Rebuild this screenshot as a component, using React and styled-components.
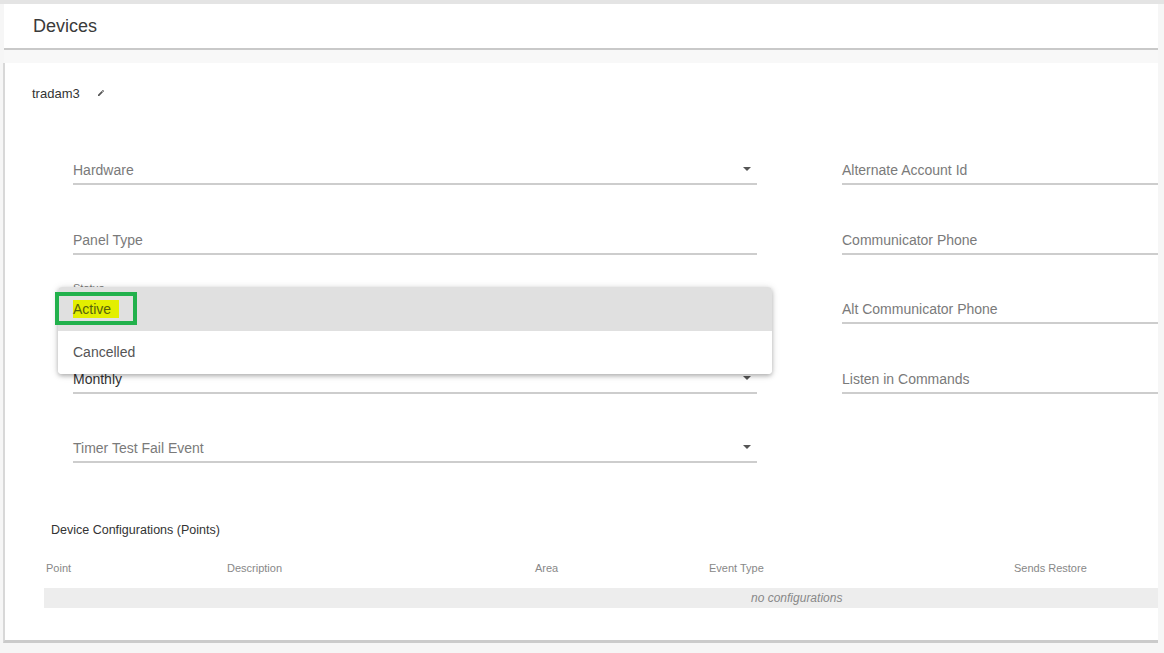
import React from 'react';
import styled, {createGlobalStyle} from "styled-components";

const GlobalStyle = createGlobalStyle`
    html, body {
        margin: 0;
        padding: 0;
        background: #f6f6f6;
        font-family: "Liberation Sans", Arial, sans-serif;
    }
`;

const leftFields = [
    {label: 'Hardware', select: true},
    {label: 'Panel Type'},
    {label: 'Status', select: true, small: true},
    {label: 'Monthly', select: true, value: true},
    {label: 'Timer Test Fail Event', select: true},
];

const rightFields = [
    'Alternate Account Id',
    'Communicator Phone',
    'Alt Communicator Phone',
    'Listen in Commands',
];

const columns = [
    {title: 'Point', left: 2},
    {title: 'Description', left: 183},
    {title: 'Area', left: 491},
    {title: 'Event Type', left: 665},
    {title: 'Sends Restore', left: 970},
];

export default function App() {
    return (
        <Page>
            <GlobalStyle/>
            <Header>
                <Title>Devices</Title>
            </Header>
            <Band/>
            <Card>
                <NameRow>
                    <Name>tradam3</Name>
                    <svg width="8" height="8" viewBox="0 0 24 24">
                        <path fill="#555" d="M3 17.25V21h3.75L17.81 9.94l-3.75-3.75L3 17.25zM20.71 7.04a1 1 0 000-1.41l-2.34-2.34a1 1 0 00-1.41 0l-1.83 1.83 3.75 3.75 1.83-1.83z"/>
                    </svg>
                </NameRow>

                <Form>
                    <Column>
                        {leftFields.map((f, key) =>
                            <Field key={key} small={f.small}>
                                <FieldText value={f.value} small={f.small}>{f.label}</FieldText>
                                {f.select && <Arrow/>}
                            </Field>
                        )}
                        <Menu>
                            <MenuItem active>
                                <Highlight>Active</Highlight>
                            </MenuItem>
                            <MenuItem>Cancelled</MenuItem>
                            <Marker/>
                        </Menu>
                    </Column>
                    <Column>
                        {rightFields.map((label, key) =>
                            <Field key={key}>
                                <FieldText>{label}</FieldText>
                            </Field>
                        )}
                    </Column>
                </Form>

                <SectionTitle>Device Configurations (Points)</SectionTitle>
                <TableHead>
                    {columns.map((c, key) =>
                        <HeadCell key={key} style={{left: c.left}}>{c.title}</HeadCell>
                    )}
                </TableHead>
                <EmptyRow>no configurations</EmptyRow>
            </Card>
        </Page>
    )
}

// styles
const Page = styled.div`
    width: 1164px;
    height: 653px;
    overflow: hidden;
    border-top: 4px solid #e4e4e4;
    box-sizing: border-box;
`;

const Header = styled.div`
    margin-left: 4px;
    width: 1154px;
    height: 46px;
    background: #fff;
    border-bottom: 2px solid #c9c9c9;
    display: flex;
    align-items: center;
    padding-left: 29px;
    box-sizing: border-box;
`;

const Title = styled.div`
    font-size: 18px;
    color: #3a3a3a;
    margin-top: 1px;
`;

const Band = styled.div`
    margin-left: 4px;
    width: 1154px;
    height: 13px;
    background: #f8f8f8;
`;

const Card = styled.div`
    position: relative;
    margin-left: 3px;
    width: 1155px;
    height: 580px;
    background: #fff;
    border-left: 2px solid #d8d8d8;
    border-bottom: 3px solid #cbcbcb;
    box-sizing: border-box;
    overflow: hidden;
    padding-top: 23px;
`;

const NameRow = styled.div`
    display: flex;
    align-items: center;
    gap: 17px;
    padding-left: 27px;
    height: 14px;
`;

const Name = styled.span`
    font-size: 13px;
    color: #333;
`;

const Form = styled.div`
    display: grid;
    grid-template-columns: 684px 1fr;
    column-gap: 85px;
    padding-left: 68px;
    margin-top: 37px;
`;

const Column = styled.div`
    position: relative;
    display: flex;
    flex-direction: column;
    gap: 21.5px;
`;

const Field = styled.div`
    position: relative;
    height: 48px;
    border-bottom: 2px solid #cdcdcd;
    box-sizing: border-box;
    display: flex;
    align-items: ${props => props.small ? 'flex-start' : 'flex-end'};
    padding-bottom: 5px;
    padding-top: ${props => props.small ? '4px' : '0'};
`;

const FieldText = styled.span`
    font-size: ${props => props.small ? '11px' : '14px'};
    color: ${props => props.value ? '#333' : '#7a7a7a'};
    line-height: 16px;
`;

const Arrow = styled.span`
    position: absolute;
    right: 6px;
    bottom: 12px;
    width: 0;
    height: 0;
    border-left: 4px solid transparent;
    border-right: 4px solid transparent;
    border-top: 4px solid #555;
`;

const Menu = styled.div`
    position: absolute;
    left: -15px;
    top: 150px;
    width: 714px;
    background: #fff;
    border-radius: 4px;
    box-shadow: 0 2px 4px rgba(0, 0, 0, 0.25), 0 1px 8px rgba(0, 0, 0, 0.12);
`;

const MenuItem = styled.div`
    height: 43.5px;
    display: flex;
    align-items: center;
    padding-left: 15px;
    font-size: 14px;
    color: #555;
    background: ${props => props.active ? '#e0e0e0' : '#fff'};
    border-radius: ${props => props.active ? '4px 4px 0 0' : '0 0 4px 4px'};
`;

const Highlight = styled.span`
    background: #e3ef00;
    color: #56620a;
    padding: 1px 8px 1px 0;
    line-height: 16px;
`;

const Marker = styled.div`
    position: absolute;
    left: -3px;
    top: 5px;
    width: 82px;
    height: 33px;
    border: 4px solid #22b14c;
    box-sizing: border-box;
`;

const SectionTitle = styled.div`
    font-size: 12.5px;
    color: #333;
    padding-left: 46px;
    margin-top: 60px;
`;

const TableHead = styled.div`
    position: relative;
    height: 20px;
    margin-top: 25px;
    margin-left: 39px;
`;

const HeadCell = styled.span`
    position: absolute;
    top: 0;
    font-size: 11px;
    color: #888;
`;

const EmptyRow = styled.div`
    margin-left: 39px;
    margin-top: 6px;
    height: 20px;
    background: #ededed;
    font-size: 12px;
    font-style: italic;
    color: #888;
    line-height: 20px;
    padding-left: 707px;
`;
